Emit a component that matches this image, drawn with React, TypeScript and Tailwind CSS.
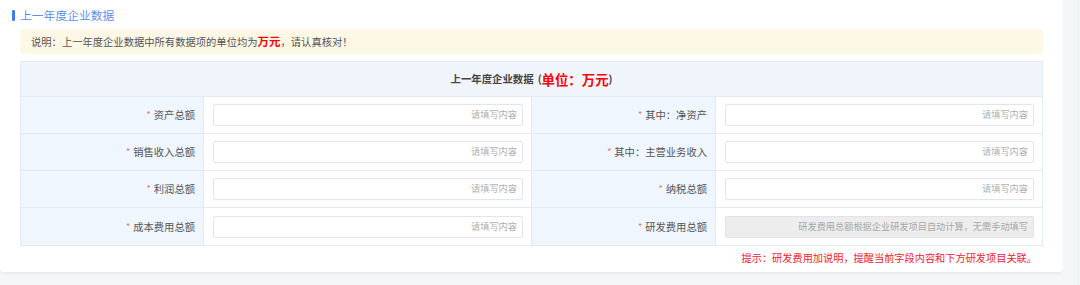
const font = { fontFamily: '"Noto Sans CJK SC", "Noto Sans", sans-serif' };

type Field = { label: string; disabled?: boolean; placeholder?: string };

const rows: [Field, Field][] = [
  [{ label: '资产总额' }, { label: '其中：净资产' }],
  [{ label: '销售收入总额' }, { label: '其中：主营业务收入' }],
  [{ label: '利润总额' }, { label: '纳税总额' }],
  [
    { label: '成本费用总额' },
    { label: '研发费用总额', disabled: true, placeholder: '研发费用总额根据企业研发项目自动计算，无需手动填写' },
  ],
];

function Label({ text, last }: { text: string; last: boolean }) {
  return (
    <div
      className={`flex items-center justify-end pr-[8px] bg-[#f0f6fd] border-r border-[#e4eaf2] ${last ? '' : 'border-b'} text-[10.3px] text-[#555]`}
    >
      <span className="text-[#f56c6c] mr-[3px] text-[9px]">*</span>
      {text}
    </div>
  );
}

function Input({ field, last, edge }: { field: Field; last: boolean; edge?: boolean }) {
  return (
    <div className={`flex items-center pl-[9px] pr-[8px] border-[#e4eaf2] ${last ? '' : 'border-b'} ${edge ? '' : 'border-r'}`}>
      <div
        className={`h-[22px] w-full rounded-[2px] border flex items-center justify-end pr-[5px] ${
          field.disabled ? 'bg-[#ededed] border-[#e3e3e3] text-[#a8a8a8]' : 'bg-white border-[#e2e5ea] text-[#b0b0b0]'
        } text-[9.2px]`}
      >
        {field.placeholder ?? '请填写内容'}
      </div>
    </div>
  );
}

export default function App() {
  return (
    <div className="w-[1080px] h-[285px] bg-[#f5f6f8] flex overflow-hidden" style={font}>
      <div className="w-[1063px] h-[272px] bg-white rounded-b-[4px] shadow-[0_1px_4px_rgba(0,0,0,0.08)] px-[20px] flex flex-col">
        {/* Section title */}
        <div className="h-[29px] flex items-center -ml-[8px] pt-[1px]">
          <span className="w-[3px] h-[11px] bg-[#3a7cf2] rounded-[1px] mr-[5px]" />
          <span className="text-[11.8px] text-[#5c8ff0]">上一年度企业数据</span>
        </div>

        {/* Notice */}
        <div className="h-[25px] bg-[#fdf7e6] rounded-[3px] flex items-center pl-[11px] text-[10.3px] text-[#555]">
          说明：上一年度企业数据中所有数据项的单位均为<span className="text-[#f00] font-bold text-[11.5px]">万元</span>，请认真核对！
        </div>

        {/* Table */}
        <div className="mt-[7px] border border-[#e4eaf2]">
          <div className="h-[35px] bg-[#f0f5fc] border-b border-[#e4eaf2] flex items-center justify-center font-bold text-[10.4px] text-[#444]">
            上一年度企业数据<span className="ml-[4px]">(</span><span className="text-[#f00] text-[13.4px]">单位：万元</span>)
          </div>
          <div className="grid grid-cols-[183px_328px_184px_1fr] auto-rows-[37px]">
            {rows.map(([a, b], i) => {
              const last = i === rows.length - 1;
              return [
                <Label key={`la${i}`} text={a.label} last={last} />,
                <Input key={`ia${i}`} field={a} last={last} />,
                <Label key={`lb${i}`} text={b.label} last={last} />,
                <Input key={`ib${i}`} field={b} last={last} edge />,
              ];
            })}
          </div>
        </div>

        {/* Hint */}
        <div className="mt-[4px] pr-[6px] text-right text-[10.2px] text-[#f5222d]">
          提示：研发费用加说明，提醒当前字段内容和下方研发项目关联。
        </div>
      </div>
      <div className="w-[14px] h-full bg-[#f5f6f8]" />
      <div className="flex-1 h-full bg-[#f1f4f8] border-l border-[#eceef1]" />
    </div>
  );
}
